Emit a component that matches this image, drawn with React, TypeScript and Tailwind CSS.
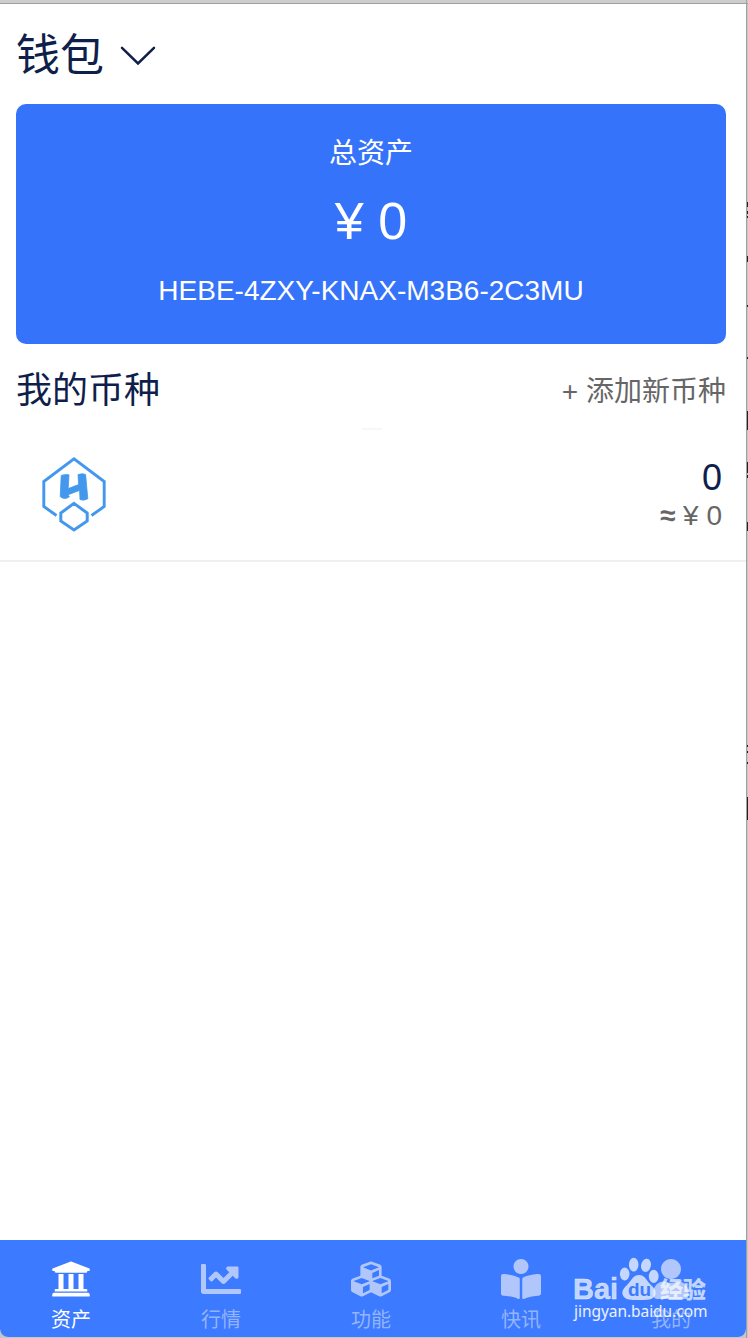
import React from 'react';
import {
  FaUniversity,
  FaChartLine,
  FaCubes,
  FaBookReader,
  FaUser,
} from 'react-icons/fa';
import type { IconType } from 'react-icons';

interface Tab {
  label: string;
  icon: IconType;
}

const tabs: Tab[] = [
  { label: '资产', icon: FaUniversity },
  { label: '行情', icon: FaChartLine },
  { label: '功能', icon: FaCubes },
  { label: '快讯', icon: FaBookReader },
  { label: '我的', icon: FaUser },
];

// slivers of the window behind, visible along the right edge
const slivers = [
  'top-[202px] h-[5px]',
  'top-[211px] h-[3px]',
  'top-[216px] h-[2px]',
  'top-[256px] h-[6px]',
  'top-[305px] h-[2px]',
  'top-[357px] h-[2px]',
  'top-[411px] h-[19px]',
  'top-[462px] h-[11px]',
  'top-[475px] h-[3px]',
  'top-[522px] h-[9px]',
  'top-[745px] h-[2px]',
  'top-[751px] h-[2px]',
  'top-[762px] h-[2px]',
  'top-[797px] h-[23px]',
];

const Chevron = () => (
  <svg width="36" height="20" viewBox="0 0 36 20" fill="none" className="mt-px">
    <path
      d="M2 1.8 18 17.4 34 1.8"
      stroke="#0f1f4b"
      strokeWidth="2.5"
      strokeLinecap="round"
    />
  </svg>
);

const CoinLogo = () => (
  <svg
    width="64"
    height="76"
    viewBox="0 0 64 76"
    fill="none"
    stroke="#4398ee"
    className="-mt-1.5"
  >
    <path d="M14.5 59.5 1.8 50.5V25.5L32 2.8 62.2 25.5V50.5L49.5 59.5" strokeWidth="2.9" />
    <path d="M32 47.4 45.2 57V65L32 74 18.8 65V57Z" strokeWidth="3" />
    <path
      d="M19.2 19.4Q23 18.2 27 18.8L26.2 32.6 36.6 28.6 36 18.6Q39.8 17 43.6 18.4L45.8 42.8Q42 45 38 43.6L37.6 34.4 26 38.8 27.4 40.8Q22.5 44.4 18.2 40.6Z"
      fill="#4398ee"
      stroke="#4398ee"
      strokeWidth="0.8"
      strokeLinejoin="round"
    />
  </svg>
);

const Watermark = () => (
  <div className="absolute left-[574px] top-[1257px] w-[136px] h-[66px] text-white/70 pointer-events-none">
    <svg
      width="136"
      height="44"
      viewBox="0 0 136 44"
      fill="currentColor"
      className="overflow-visible"
    >
      <ellipse cx="50.7" cy="17" rx="4.8" ry="6.4" />
      <ellipse cx="59.7" cy="7.7" rx="4.8" ry="6.9" />
      <ellipse cx="72" cy="8.3" rx="4.9" ry="6.7" transform="rotate(12 72 8.3)" />
      <ellipse cx="79.7" cy="19.3" rx="4.9" ry="6.6" />
      <path d="M65 18c5.5 0 7.5 5 11 9 4 4 7 7 5 11.500-2 4.500-8 4.500-16 4.500s-14 0-16-4.500c-2-4.500 1-7.500 5-11.500 3.500-4 5.500-9 11-9Z" />
      <text
        x="-1"
        y="42"
        fontSize="29"
        fontWeight="700"
        fontFamily="Liberation Sans, sans-serif"
        stroke="currentColor"
        strokeWidth="0.4"
      >
        Bai
      </text>
      <text
        x="54"
        y="38.500"
        fontSize="19"
        fontWeight="700"
        fontFamily="Liberation Sans, sans-serif"
        fill="#3c7aff"
      >
        du
      </text>
      <text
        x="86"
        y="40.500"
        fontSize="23"
        fontWeight="900"
        fontFamily="Noto Sans CJK SC, sans-serif"
      >
        经验
      </text>
    </svg>
    <div className="-mt-px text-[15.5px] leading-[22px] tracking-[-0.05px] text-white/90 font-['Noto_Sans',sans-serif]">
      jingyan.baidu.com
    </div>
  </div>
);

const App: React.FC = () => {
  return (
    <div className="relative w-[748px] h-[1338px] overflow-hidden bg-[#c6c6c6] font-['Liberation_Sans','Noto_Sans_CJK_SC',sans-serif]">
      <div className="h-1 bg-[#cdcdcd] border-b border-[#a0a0a0]" />
      <div className="flex flex-col w-[746px] h-[1333px] bg-white rounded-b-[8px] overflow-hidden">
        <header className="flex items-center h-[100px] pt-0.5 pl-4 gap-4 text-[#0f1f4b]">
          <h1 className="mt-0.5 text-[44px] leading-none">钱包</h1>
          <Chevron />
        </header>

        <section className="flex flex-col items-center ml-4 mr-5 h-[240px] shrink-0 rounded-[10px] bg-[#3673fb] text-white">
          <p className="mt-[30px] text-[28px] leading-10">总资产</p>
          <p className="mt-[15px] text-[52px] leading-[64px]">¥ 0</p>
          <p className="mt-[18px] text-[28px] leading-10">HEBE-4ZXY-KNAX-M3B6-2C3MU</p>
        </section>

        <div className="flex items-center justify-between h-[84px] pt-2.5 shrink-0 pl-4 pr-5">
          <h2 className="text-[36px] text-[#0f1f4b]">我的币种</h2>
          <button className="pt-px text-[28px] text-[#666]">+ 添加新币种</button>
        </div>
        <div className="ml-[362px] w-5 h-0.5 shrink-0 rounded-full bg-[#f7f7f7]" />

        <div className="flex items-center justify-between h-[132px] shrink-0 pt-1 pl-[42px] pr-6 border-b-2 border-[#efefef]">
          <CoinLogo />
          <div className="-mt-0.5 text-right">
            <p className="text-[36px] leading-10 text-[#0f1f4b]">0</p>
            <p className="text-[28px] leading-9 text-[#666]">
              <span className="font-bold">≈</span> ¥ 0
            </p>
          </div>
        </div>

        <nav className="flex mt-auto -ml-1 w-[750px] h-[97px] shrink-0 bg-[#3c7aff]">
          {tabs.map((tab, index) => (
            <button
              key={tab.label}
              className={`flex flex-col items-center w-[150px] pt-[19px] ${
                index === 0 ? 'text-white' : 'text-[#b1c7fb]'
              }`}
            >
              <tab.icon className="w-10 h-10" />
              <span
                className={`mt-1.5 text-[20px] leading-[30px] ${
                  index === 0 ? 'text-white' : 'text-[#93b4fc]'
                }`}
              >
                {tab.label}
              </span>
            </button>
          ))}
        </nav>
      </div>

      <div className="absolute right-0 top-0 w-0.5 h-full border-l border-[#a0a0a0]">
        {slivers.map(sliver => (
          <span key={sliver} className={`absolute left-0 w-px bg-[#222] ${sliver}`} />
        ))}
      </div>
      <Watermark />
    </div>
  );
};

export default App;
